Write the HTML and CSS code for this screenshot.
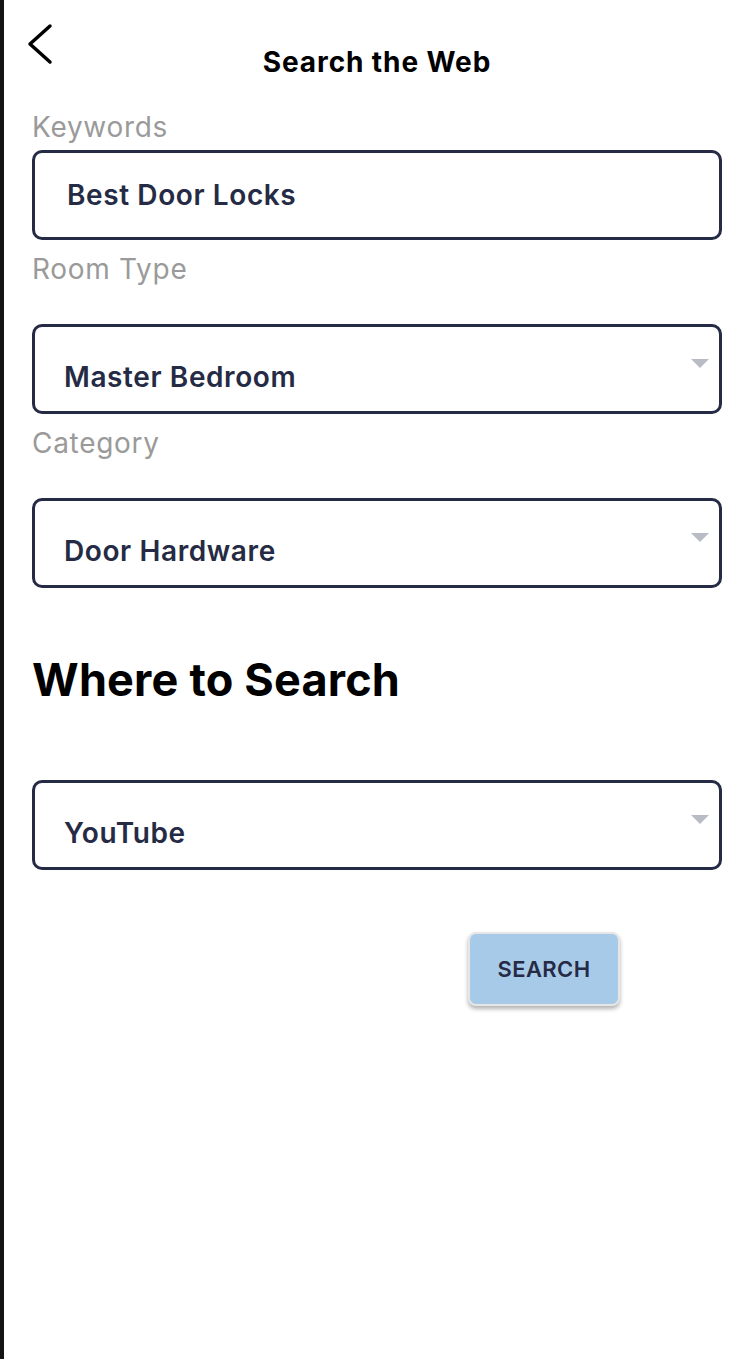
FILE: index.html
```html
<!DOCTYPE html>
<html>
<head>
<meta charset="utf-8">
<link rel="stylesheet" href="styles.css">
</head>
<body>
<div class="page">
  <header class="header">
    <button class="back" aria-label="Back">
      <svg width="28" height="42" viewBox="0 0 28 42"><polyline points="24,3 4,21 24,39" fill="none" stroke="#000" stroke-width="3.5" stroke-linecap="round" stroke-linejoin="round"/></svg>
    </button>
    <h1 class="title">Search the Web</h1>
    <span></span>
  </header>

  <div class="label">Keywords</div>
  <div class="field input"><span class="value">Best Door Locks</span></div>

  <div class="label">Room Type</div>
  <div class="field select"><span class="value">Master Bedroom</span><span class="caret"></span></div>

  <div class="label">Category</div>
  <div class="field select"><span class="value">Door Hardware</span><span class="caret"></span></div>

  <h2 class="section">Where to Search</h2>
  <div class="field select where"><span class="value">YouTube</span><span class="caret"></span></div>

  <div class="actions">
    <button class="search-btn">SEARCH</button>
  </div>
</div>
</body>
</html>
```

FILE: styles.css
```css
* { box-sizing: border-box; }
html, body { margin: 0; padding: 0; background: #fff; }
body { font-family: Inter, "Noto Sans", sans-serif; }

.page {
  min-height: 1359px;
  border-left: 4px solid #141414;
  padding: 0 28px;
}

.header {
  display: grid;
  grid-template-columns: 1fr auto 1fr;
  align-items: start;
  height: 110px;
}
.back {
  background: none;
  border: 0;
  padding: 0;
  margin: 23px 0 0 -6px;
  width: 28px;
  height: 42px;
  justify-self: start;
}
.title {
  margin: 42px 0 0;
  font-size: 28px;
  font-weight: 700;
  line-height: 40px;
  color: #000;
  letter-spacing: 0.9px;
}

.label {
  font-size: 28px;
  line-height: 34px;
  color: #9a9a9a;
  font-weight: 400;
  letter-spacing: 0.7px;
}

.field {
  height: 90px;
  border: 3px solid #252b44;
  border-radius: 10px;
  display: flex;
  align-items: center;
  color: #252b44;
  font-size: 28px;
  font-weight: 600;
  letter-spacing: 0.6px;
}
.input {
  margin: 6px 0 12px;
  padding: 0 0 0 32px;
}
.select {
  margin: 38px 0 12px;
  padding: 16px 10px 0 29px;
}
.select .value { flex: 1; }
.caret {
  align-self: flex-start;
  margin-top: 16px;
  width: 0;
  height: 0;
  border-left: 9px solid transparent;
  border-right: 9px solid transparent;
  border-top: 9px solid #b9bcc5;
}

.section {
  margin: 66px 0 0;
  font-size: 45px;
  line-height: 52px;
  font-weight: 700;
  color: #000;
  letter-spacing: 0.2px;
}
.where { margin-top: 74px; }

.actions {
  display: flex;
  padding-left: 436px;
  margin-top: 62px;
}
.search-btn {
  width: 152px;
  height: 74px;
  background: #a8cae9;
  border: 2px solid #e6e6e6;
  border-radius: 8px;
  box-shadow: 0 3px 4px rgba(0,0,0,0.3);
  font-family: Inter, "Noto Sans", sans-serif;
  font-size: 22px;
  font-weight: 600;
  color: #252b44;
  letter-spacing: 0.4px;
}
```
